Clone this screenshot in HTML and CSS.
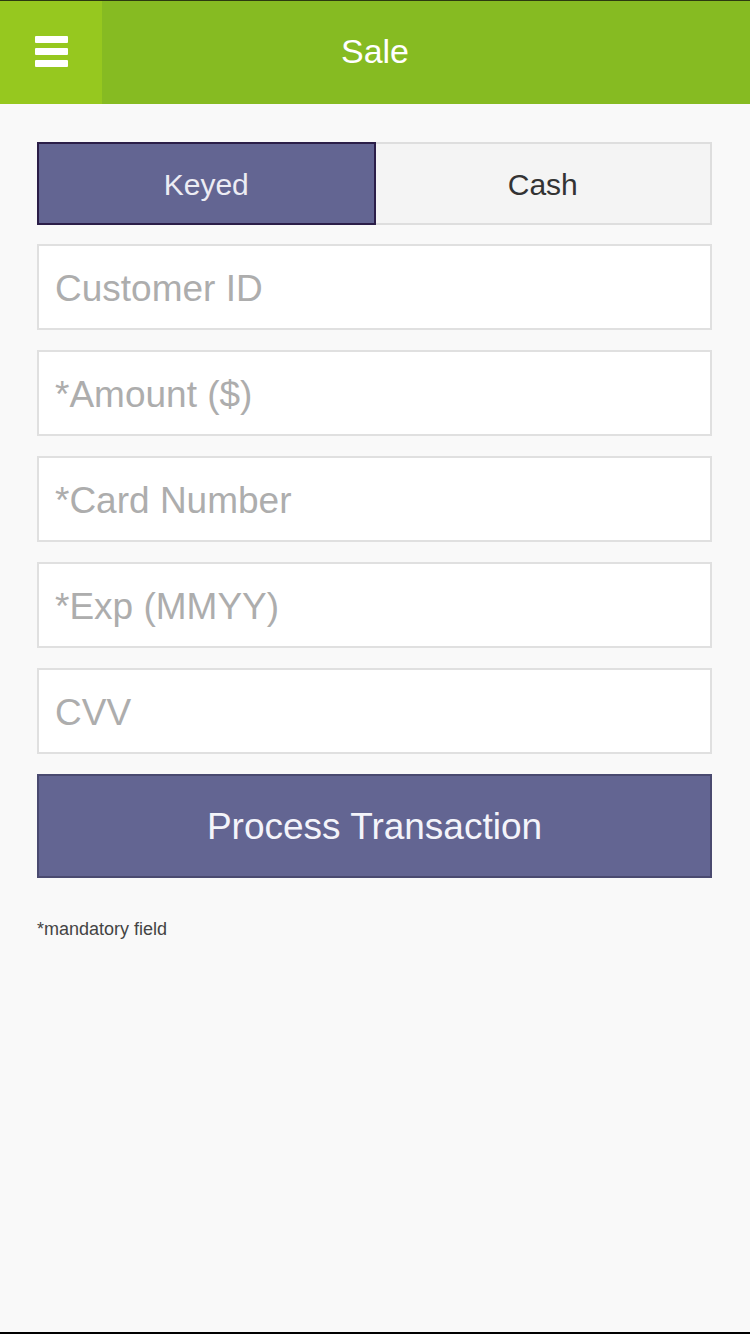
FILE: index.html
```html
<!DOCTYPE html>
<html lang="en">
<head>
	<meta charset="UTF-8">
	<title>Sale</title>
	<link rel="stylesheet" href="styles.css">
</head>
<body>
<div id="screen">
    <div id="header">
        <a href="javascript:;" id="menu">
            <span></span>
            <span></span>
            <span></span>
        </a>
        <div id="title">Sale</div>
    </div>
    <div id="content">
        <div id="tabs">
            <a href="javascript:;" class="tab on">Keyed</a>
            <a href="javascript:;" class="tab">Cash</a>
        </div>
        <input class="field" type="text" placeholder="Customer ID">
        <input class="field" type="text" placeholder="*Amount ($)">
        <input class="field" type="text" placeholder="*Card Number">
        <input class="field" type="text" placeholder="*Exp (MMYY)">
        <input class="field" type="text" placeholder="CVV">
        <a href="javascript:;" id="process">Process Transaction</a>
        <p id="note">*mandatory field</p>
    </div>
</div>
</body>
</html>
```

FILE: styles.css
```css
*
{
    margin: 0;
    padding: 0;
    box-sizing: border-box;
    text-decoration: none;
}
body
{
    font-family: "Liberation Sans", Arial, sans-serif;
    background: #f9f9f9;
}
#screen
{
    display: flex;
    flex-direction: column;
    height: 1334px;
    border-top: 1px solid #2c3a10;
    border-bottom: 2px solid #000;
    background: #f9f9f9;
}
#header
{
    display: flex;
    height: 103px;
    background: #86bb22;
}
#menu
{
    display: flex;
    flex-direction: column;
    justify-content: center;
    gap: 5px;
    width: 102px;
    padding-left: 35px;
    padding-bottom: 2px;
    background: #96c81f;
}
#menu span
{
    display: block;
    width: 33px;
    height: 7px;
    border-radius: 1px;
    background: #fff;
}
#title
{
    flex: 1;
    display: flex;
    align-items: center;
    justify-content: center;
    padding-right: 102px;
    padding-bottom: 2px;
    font-size: 34px;
    color: #fff;
}
#content
{
    display: flex;
    flex-direction: column;
    gap: 20px;
    padding: 38px 38px 0 37px;
}
#tabs
{
    display: flex;
    height: 83px;
    margin-bottom: -1px;
}
.tab
{
    flex: 1;
    display: flex;
    align-items: center;
    justify-content: center;
    padding-top: 3px;
    font-size: 30px;
    color: #333;
    background: #f4f4f4;
    border: 2px solid #dedede;
    border-left: none;
}
.tab.on
{
    color: #ececf4;
    background: #636592;
    border: 2px solid #2b1e48;
}
.field
{
    display: block;
    width: 100%;
    height: 86px;
    padding: 4px 16px 0;
    font-family: "Liberation Sans", Arial, sans-serif;
    font-size: 37px;
    color: #333;
    background: #fff;
    border: 2px solid #e0e0e0;
    border-radius: 0;
    outline: none;
}
.field::placeholder
{
    color: #adadad;
}
#process
{
    display: flex;
    align-items: center;
    justify-content: center;
    height: 104px;
    padding-top: 2px;
    font-size: 37px;
    color: #f4f4fa;
    background: #636592;
    border: 2px solid #4a4a70;
}
#note
{
    margin-top: 21px;
    font-size: 18px;
    color: #444;
}
```
